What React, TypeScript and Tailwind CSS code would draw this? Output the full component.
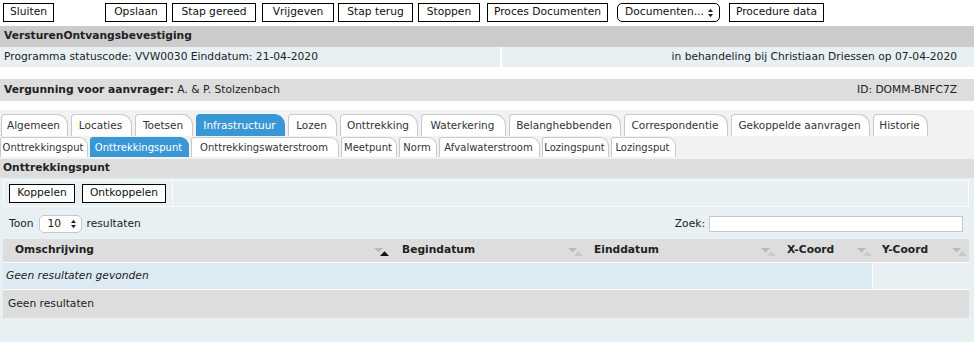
import React from "react";

function SortIcon({ active = false }: { active?: boolean }) {
  return (
    <svg width="16" height="8" viewBox="0 0 16 8" className="absolute right-[1px] top-[9px]">
      <polygon points="0,0 9,0 4.5,4.5" fill="#b9b9b9" />
      <polygon points="6,8 15,8 10.5,3.2" fill={active ? "#111111" : "#c9c9c9"} />
    </svg>
  );
}

function SelectArrows() {
  return (
    <svg width="7" height="10" viewBox="0 0 7 10">
      <polygon points="1,4 6,4 3.5,0.8" fill="#222" />
      <polygon points="1,6 6,6 3.5,9.2" fill="#222" />
    </svg>
  );
}

function Btn({ label, w, ml }: { label: string; w: string; ml: string }) {
  return (
    <div
      className={`${w} ${ml} h-[19px] border border-black bg-white flex items-center justify-center text-[10.7px] text-[#111] whitespace-nowrap`}
    >
      {label}
    </div>
  );
}

const tabs1: { label: string; w: string; active?: boolean }[] = [
  { label: "Algemeen", w: "w-[67px]" },
  { label: "Locaties", w: "w-[61px]" },
  { label: "Toetsen", w: "w-[58px]" },
  { label: "Infrastructuur", w: "w-[89px]", active: true },
  { label: "Lozen", w: "w-[49px]" },
  { label: "Onttrekking", w: "w-[78px]" },
  { label: "Waterkering", w: "w-[85px]" },
  { label: "Belanghebbenden", w: "w-[112px]" },
  { label: "Correspondentie", w: "w-[104px]" },
  { label: "Gekoppelde aanvragen", w: "w-[139px]" },
  { label: "Historie", w: "w-[55px]" },
];

const tabs2: { label: string; w: string; active?: boolean }[] = [
  { label: "Onttrekkingsput", w: "w-[88px]" },
  { label: "Onttrekkingspunt", w: "w-[99px]", active: true },
  { label: "Onttrekkingswaterstroom", w: "w-[148px]" },
  { label: "Meetpunt", w: "w-[56px]" },
  { label: "Norm", w: "w-[38px]" },
  { label: "Afvalwaterstroom", w: "w-[101px]" },
  { label: "Lozingspunt", w: "w-[67px]" },
  { label: "Lozingsput", w: "w-[65px]" },
];

export default function App() {
  return (
    <div className="w-[974px] h-[347px] bg-white font-['DejaVu_Sans',Verdana,sans-serif] text-[10.7px] text-[#222] overflow-hidden">
      {/* top buttons */}
      <div className="flex pt-[3px] h-[26px]">
        <Btn label="Sluiten" w="w-[51px]" ml="ml-[3px]" />
        <Btn label="Opslaan" w="w-[62px]" ml="ml-[51px]" />
        <Btn label="Stap gereed" w="w-[84px]" ml="ml-[5px]" />
        <Btn label="Vrijgeven" w="w-[72px]" ml="ml-[6px]" />
        <Btn label="Stap terug" w="w-[75px]" ml="ml-[4px]" />
        <Btn label="Stoppen" w="w-[62px]" ml="ml-[5px]" />
        <Btn label="Proces Documenten" w="w-[121px]" ml="ml-[7px]" />
        <div className="ml-[9px] w-[103px] h-[19px] border border-black rounded-[5px] bg-white flex items-center justify-between pl-[7px] pr-[5px] text-[10.7px] text-[#111]">
          <span>Documenten...</span>
          <SelectArrows />
        </div>
        <Btn label="Procedure data" w="w-[95px]" ml="ml-[9px]" />
      </div>

      {/* title bar */}
      <div className="h-[21px] bg-[#cccccc] flex items-center pl-[4px] font-bold text-[#222]">
        VersturenOntvangsbevestiging
      </div>
      <div className="h-[20px] flex gap-[2px] bg-white">
        <div className="w-[500px] bg-[#e8f0f3] flex items-center pl-[4px]">
          Programma statuscode: VVW0030 Einddatum: 21-04-2020
        </div>
        <div className="flex-1 bg-[#e8f0f3] flex items-center justify-end pr-[17px]">
          in behandeling bij Christiaan Driessen op 07-04-2020
        </div>
      </div>

      <div className="h-[12px]" />
      <div className="h-[22px] bg-[#dddddd] flex items-center justify-between pl-[4px] pr-[17px]">
        <div>
          <span className="font-bold">Vergunning voor aanvrager:</span> A. &amp; P. Stolzenbach
        </div>
        <div>ID: DOMM-BNFC7Z</div>
      </div>

      <div className="h-[9px]" />
      {/* tabs */}
      <div className="bg-[#f2f2f2] pt-[4px] h-[49px]">
        <div className="flex gap-[3px] pl-[1px] h-[22px]">
          {tabs1.map((t) => (
            <div
              key={t.label}
              className={`${t.w} h-[22px] flex items-center justify-center pr-[2px] rounded-tl-[4px] rounded-tr-[11px] border-t border-l border-r text-[10.5px] whitespace-nowrap ${
                t.active
                  ? "bg-[#3a97d5] border-[#3a97d5] text-white"
                  : "bg-white border-[#c9c9c9] text-[#333]"
              }`}
            >
              {t.label}
            </div>
          ))}
        </div>
        <div className="flex gap-[2px] h-[20px] mt-[1px]">
          {tabs2.map((t) => (
            <div
              key={t.label}
              className={`${t.w} h-[20px] flex items-center justify-center pr-[2px] rounded-tl-[3px] rounded-tr-[9px] border-t border-l border-r text-[10px] whitespace-nowrap ${
                t.active
                  ? "bg-[#3a97d5] border-[#3a97d5] text-white"
                  : "bg-white border-[#c9c9c9] text-[#333]"
              }`}
            >
              {t.label}
            </div>
          ))}
        </div>
      </div>

      {/* section header */}
      <div className="h-[19px] bg-[#dddddd] flex items-center pl-[3px] font-bold text-[#222]">
        Onttrekkingspunt
      </div>

      {/* panel */}
      <div className="bg-[#e8f0f3] h-[164px] pt-[2px]">
        <div className="ml-[3px] w-[966px] h-[27px] border border-[#f9fbfc] flex">
          <div className="w-[169px] border-r border-[#f9fbfc] flex items-center gap-[7px] pl-[5px]">
            <Btn label="Koppelen" w="w-[66px]" ml="ml-0" />
            <Btn label="Ontkoppelen" w="w-[84px]" ml="ml-0" />
          </div>
          <div className="flex-1" />
        </div>

        <div className="flex items-center justify-between h-[18px] mt-[8px] pr-[11px]">
          <div className="flex items-center pl-[9px]">
            <span>Toon</span>
            <div className="ml-[5px] w-[43px] h-[18px] bg-white border border-[#c8c8c8] rounded-[5px] flex items-center justify-between pl-[8px] pr-[4px]">
              <span>10</span>
              <SelectArrows />
            </div>
            <span className="ml-[5px]">resultaten</span>
          </div>
          <div className="flex items-center">
            <span>Zoek:</span>
            <div className="ml-[4px] w-[254px] h-[16px] bg-white border border-[#c8c8c8]" />
          </div>
        </div>

        {/* table */}
        <div className="mt-[6px] ml-[3px] w-[966px]">
          <div className="flex h-[24px] bg-[#dddddd] font-bold text-[#222] border-b border-white">
            <div className="relative w-[388px] pl-[12px] flex items-center">
              Omschrijving
              <SortIcon active />
            </div>
            <div className="relative w-[194px] pl-[11px] flex items-center">
              Begindatum
              <SortIcon />
            </div>
            <div className="relative w-[193px] pl-[9px] flex items-center">
              Einddatum
              <SortIcon />
            </div>
            <div className="relative w-[96px] pl-[9px] flex items-center">
              X-Coord
              <SortIcon />
            </div>
            <div className="relative flex-1 pl-[8px] flex items-center">
              Y-Coord
              <SortIcon />
            </div>
          </div>
          <div className="flex h-[27px] border-b border-white">
            <div className="w-[870px] bg-[#dceaf4] border-r border-white flex items-center pl-[3px] italic">
              Geen resultaten gevonden
            </div>
            <div className="flex-1" />
          </div>
          <div className="h-[28px] bg-[#dddddd] flex items-center pl-[5px]">Geen resultaten</div>
        </div>
      </div>
    </div>
  );
}
